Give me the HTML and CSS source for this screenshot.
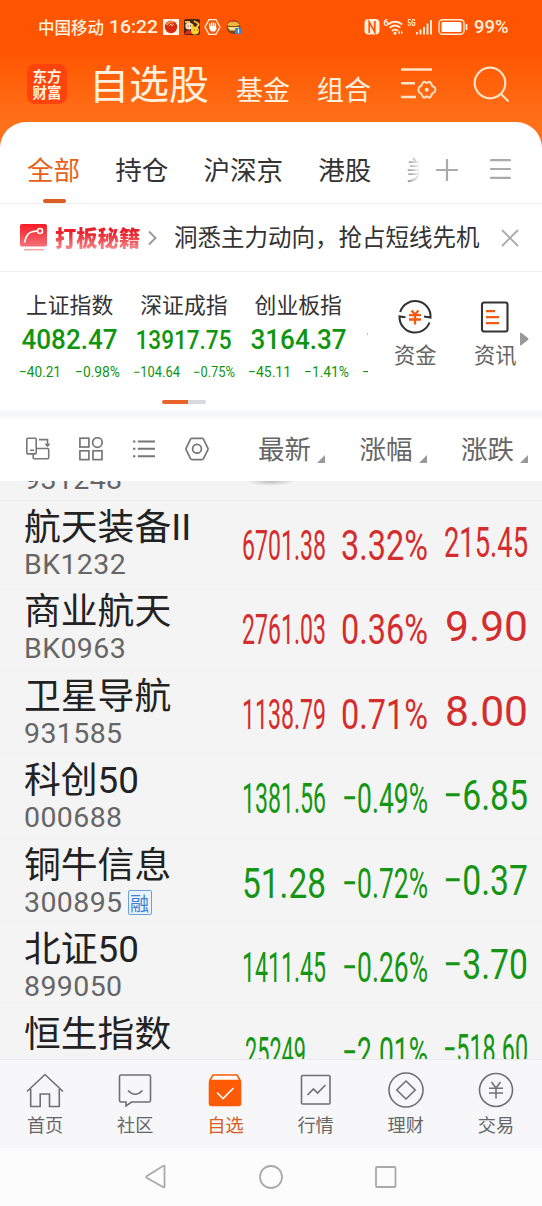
FILE: index.html
```html
<!DOCTYPE html>
<html lang="zh-CN">
<head>
  <meta charset="utf-8" />
  <meta name="viewport" content="width=device-width, initial-scale=1" />
  <title>自选股</title>
  <link rel="stylesheet" href="styles.css">
</head>
<body>
  <div class="app">
    <header class="header">
      <div class="status">
        <span class="carrier">中国移动</span>
        <svg class="clock" width="50" height="20"><text x="0" y="16" textLength="49" lengthAdjust="spacingAndGlyphs">16:22</text></svg>
        <svg class="notices" width="80" height="18" viewBox="0 0 80 18">
          <rect x="0" y="1" width="16" height="16" fill="#fff3e4"/>
          <circle cx="8" cy="9" r="6.2" fill="#d92b12"/>
          <path d="M3.5 7q3-4 7-2.500" stroke="#f58a3c" stroke-width="2" fill="none"/>
          <path d="M6 8l2-2 1 2 2-2" stroke="#ffd27a" fill="none"/>
          <rect x="21" y="1" width="16" height="16" rx="2" fill="#4b2515"/>
          <path d="M22 4h5M31 3l5 3" stroke="#efb52c" stroke-width="2"/>
          <circle cx="26" cy="8" r="3.600" fill="#ffe1bd"/>
          <path d="M24.500 8h1M27 8h1" stroke="#24120b"/>
          <path d="M22 15q3-5 7-1l1 2h-8z" fill="#e52c21"/>
          <circle cx="32" cy="12.500" r="4" fill="#ffd52b"/>
          <path d="M30 9l-1-3M34 9l2-3" stroke="#ffd52b" stroke-width="2"/>
          <path d="M31 12h.8M34 12h.8" stroke="#333"/>
          <path d="M46 1.700h7l4 7.300-4 7.300h-7L42 9z" fill="none" stroke="#fff0df" stroke-width="1.300"/>
          <path d="M46.800 9V6M48.700 8V4.800M50.600 8V4.800M52.400 9V6" stroke="#fff" stroke-width="1.300" stroke-linecap="round"/>
          <path d="M46.200 8h6.900v2.500l1.300-1-2.400 4h-3.800q-2-2-2-5z" fill="#fff"/>
          <circle cx="70.500" cy="9" r="7" fill="#7a4a25"/>
          <path d="M64 7q6-8 13 0l-3 1H66z" fill="#f2b63e"/>
          <path d="M64.500 9h12l-2 3.500H67z" fill="#ffe07f"/>
          <path d="M68 4l2-3 3 3" fill="#e33a1a"/>
          <rect x="72" y="10" width="7" height="6" rx="1" fill="#3987d3"/>
          <path d="M75.500 11v4" stroke="#fff"/>
        </svg>
        <svg class="signals" width="106" height="18" viewBox="0 0 106 18">
          <rect x=".5" y="1" width="15" height="15.500" rx="4" fill="#fff0df"/>
          <path d="M5.200 15V4l5.600 10V3" stroke="#ff5500" stroke-width="1.700" fill="none"/>
          <g fill="none" stroke="#fff0df" stroke-width="1.900" stroke-linecap="round">
            <path d="M24.500 6q6.500-4.500 13 0M26.300 9.300q4.700-3.800 9.400 0M28.500 12.500q2.500-1.800 5 0"/>
          </g>
          <circle cx="31" cy="15.300" r="1.500" fill="#fff0df"/>
          <path d="M34 14.500l2-2v4zM39 14.500l-2-2v4z" fill="#fff0df"/>
          <text x="19.500" y="8" class="tiny">6</text>
          <text x="43.500" y="8" class="tiny" textLength="8" lengthAdjust="spacingAndGlyphs">5G</text>
          <path d="M53 16.500v-2.500M56.500 16.500v-5M60 16.500V9M63.500 16.500V5.500M67 16.500V2" stroke="#fff0df" stroke-width="1.900"/>
          <rect x="75" y="1.700" width="25" height="14.600" rx="3.500" fill="none" stroke="#fff0df" stroke-width="1.400"/>
          <rect x="77.500" y="4" width="20" height="10" rx="1.500" fill="#fff"/>
          <path d="M102.500 6v6" stroke="#fff0df" stroke-width="1.700"/>
        </svg>
        <svg class="clock" width="35" height="20"><text x="0" y="16" textLength="34.500" lengthAdjust="spacingAndGlyphs">99%</text></svg>
      </div>
      <div class="titlebar">
        <div class="logo"><span>东方</span><span>财富</span></div>
        <h1>自选股</h1>
        <span class="head-link">基金</span>
        <span class="head-link">组合</span>
        <svg class="manage" width="37" height="36" viewBox="0 0 37 36" fill="none" stroke="#ffe3c8" stroke-width="2.400">
          <path d="M0 3.500h31M0 17.300h14M0 31h15"/>
          <path d="M22.200 16.200q1.200-.9 2.300.2 1.200 1 2.400 0 1.100-1.100 2.300-.2l1.500 2.500q.2 1.700 2 2 1.700.8 1.700 3t-1.700 3q-1.800.3-2 2l-1.500 2.500q-1.200.9-2.300-.2-1.200-1-2.400 0-1.100 1.100-2.300.2l-1.500-2.500q-.2-1.700-2-2-1.300-.8-1.300-3t1.300-3q1.800-.3 2-2z" stroke-width="2"/>
          <circle cx="25.700" cy="23.700" r="2" fill="#ffe3c8" stroke="none"/>
        </svg>
        <svg class="search" width="38" height="38" viewBox="0 0 38 38" fill="none" stroke="#ffe3c8" stroke-width="2.200">
          <circle cx="17" cy="17" r="15.300"/><path d="M27.500 27.500l8 8"/>
        </svg>
      </div>
    </header>

    <main class="panel">
      <nav class="groups">
        <a class="group active">全部</a>
        <a class="group">持仓</a>
        <a class="group">沪深京</a>
        <a class="group">港股</a>
        <a class="group more">美</a>
        <svg class="add" width="22" height="22" viewBox="0 0 22 22" stroke="#aaa" stroke-width="2.200" stroke-linecap="round"><path d="M1 11h20M11 1v20"/></svg>
        <svg class="menu" width="21" height="20" viewBox="0 0 21 20" stroke="#aaa" stroke-width="2.200" stroke-linecap="round"><path d="M1 1.200h19M1 10h19M1 18.800h19"/></svg>
      </nav>

      <div class="notice">
        <svg width="28" height="28" viewBox="0 0 28 28">
          <defs><linearGradient id="red" x2="0" y2="1"><stop stop-color="#f81b24"/><stop offset="1" stop-color="#f37278"/></linearGradient></defs>
          <rect x="0" y="0" width="27" height="22.500" rx="2" fill="url(#red)"/>
          <path d="M4.500 18.500q2-9 7-10.500 3-1 6-.8" fill="none" stroke="#fff" stroke-width="1.800"/>
          <circle cx="20" cy="7" r="2.500" fill="none" stroke="#fff" stroke-width="1.500"/>
          <path d="M4 25.700h20" stroke="#f7a5a5" stroke-width="1.500"/>
        </svg>
        <strong>打板秘籍</strong>
        <svg class="chevron" width="9" height="16" viewBox="0 0 9 16" fill="none" stroke="#999" stroke-width="1.900"><path d="M1 1.500l6.500 6.500L1 14.500"/></svg>
        <span class="notice-text">洞悉主力动向，抢占短线先机</span>
        <svg class="close" width="18" height="18" viewBox="0 0 18 18" stroke="#aaa" stroke-width="1.800"><path d="M1 1l16 16M17 1L1 17"/></svg>
      </div>

      <section class="market">
        <div class="indices">
          <div class="index">
            <span>上证指数</span>
            <svg width="114" height="80">
              <text class="price" x="6.500" y="29.500" font-size="28" textLength="96" lengthAdjust="spacingAndGlyphs">4082.47</text>
              <text class="delta" x="4" y="58" textLength="42" lengthAdjust="spacingAndGlyphs">−40.21</text>
              <text class="delta" x="60" y="58" textLength="45" lengthAdjust="spacingAndGlyphs">−0.98%</text>
            </svg>
          </div>
          <div class="index">
            <span>深证成指</span>
            <svg width="114" height="80">
              <text class="price" x="6.500" y="29.500" font-size="25" textLength="96" lengthAdjust="spacingAndGlyphs">13917.75</text>
              <text class="delta small" x="4" y="58" textLength="47" lengthAdjust="spacingAndGlyphs">−104.64</text>
              <text class="delta small" x="64" y="58" textLength="42" lengthAdjust="spacingAndGlyphs">−0.75%</text>
            </svg>
          </div>
          <div class="index">
            <span>创业板指</span>
            <svg width="114" height="80">
              <text class="price" x="6.500" y="29.500" font-size="28" textLength="96" lengthAdjust="spacingAndGlyphs">3164.37</text>
              <text class="delta" x="4" y="58" textLength="43" lengthAdjust="spacingAndGlyphs">−45.11</text>
              <text class="delta" x="60" y="58" textLength="45" lengthAdjust="spacingAndGlyphs">−1.41%</text>
            </svg>
          </div>
          <div class="index">
            <span></span>
            <svg width="20" height="80">
              <text class="price" x="7.500" y="29.500" font-size="25">1</text>
              <text class="delta" x="4" y="58">−</text>
            </svg>
          </div>
        </div>
        <div class="shortcut">
          <svg width="36" height="36" viewBox="0 0 36 36" fill="none" stroke="#333" stroke-width="2.100">
            <path d="M3.200 13A15.500 15.500 0 0 1 33.500 18.500l-6.500-1"/>
            <path d="M32.500 23.500A15.500 15.500 0 0 1 2.500 17.500l6 .8"/>
            <path d="M14.500 11.500l3.500 4 3.500-4M12 16.200h12M12 20.500h12M18 15.500v10" stroke="#f45b12" stroke-width="2.300"/>
          </svg>
          <span>资金</span>
        </div>
        <div class="shortcut">
          <svg width="36" height="36" viewBox="0 0 36 36" fill="none" stroke="#333" stroke-width="2.100">
            <rect x="5" y="3.500" width="25.500" height="29" rx="2"/>
            <path d="M9 12.200h9M9 18.200h13M9 24.200h13" stroke="#f45b12" stroke-width="2.300"/>
          </svg>
          <span>资讯</span>
        </div>
        <svg class="next" width="9" height="14" viewBox="0 0 9 14"><path d="M0 1.500Q0 0 1.300.7L8 6q1 1 0 2L1.300 13.300Q0 14 0 12.500z" fill="#999"/></svg>
        <div class="pager"></div>
      </section>

      <section class="columns">
        <svg width="24" height="24" viewBox="0 0 24 24" fill="none" stroke="#777" stroke-width="1.600">
          <path d="M10.200 8V2.200q0-.9-.9-.9H1.700q-.9 0-.9.900V16q0 .9.900.9h7.600q.9 0 .9-.9V8M4 13.300h4M13 2.600h8.500V9M19.300 6.800l2.200 2.200 2-2.200M10.200 11.500h11.500q1 0 1 1v8.200q0 1-1 1H8.200q-1 0-1-1V17"/>
        </svg>
        <svg width="24" height="24" viewBox="0 0 24 24" fill="none" stroke="#777" stroke-width="1.700">
          <rect x=".9" y="1.200" width="9" height="8.800"/><circle cx="18.400" cy="5.500" r="4.800"/><rect x=".9" y="13.800" width="9" height="8.800"/><rect x="14" y="13.800" width="9" height="8.800"/>
        </svg>
        <svg width="24" height="24" viewBox="0 0 24 24" fill="none" stroke="#777" stroke-width="1.900">
          <path d="M1 4.500h2.400M5.800 4.500H23M1 11.800h2.400M5.800 11.800H23M1 19.200h2.400M5.800 19.200H23"/>
        </svg>
        <svg width="24" height="24" viewBox="0 0 24 24" fill="none" stroke="#777" stroke-width="1.700">
          <path d="M7 1.300h10q1 0 1.500.8l4.300 9q.4.900 0 1.700l-4.300 8.900q-.5.900-1.500.9H7q-1 0-1.500-.9l-4.300-8.900q-.4-.8 0-1.700l4.300-9q.5-.8 1.500-.8z"/><circle cx="12" cy="11.700" r="4.400"/>
        </svg>
        <span class="sort">最新</span>
        <span class="sort">涨幅</span>
        <span class="sort">涨跌</span>
      </section>
    </main>

    <section class="list">
      <div class="row">
        <div class="stock"><span class="name"></span><span class="code">931248</span></div>
      </div>
      <div class="row up">
        <div class="stock"><span class="name">航天装备II</span><span class="code">BK1232</span></div>
        <svg class="nums" width="300" height="84"><text x="12" y="58.500" textLength="84" lengthAdjust="spacingAndGlyphs">6701.38</text><text x="111" y="58.500" textLength="87" lengthAdjust="spacingAndGlyphs">3.32%</text><text x="214" y="56" textLength="84" lengthAdjust="spacingAndGlyphs">215.45</text></svg>
      </div>
      <div class="row up">
        <div class="stock"><span class="name">商业航天</span><span class="code">BK0963</span></div>
        <svg class="nums" width="300" height="84"><text x="12" y="58.500" textLength="84" lengthAdjust="spacingAndGlyphs">2761.03</text><text x="111" y="58.500" textLength="87" lengthAdjust="spacingAndGlyphs">0.36%</text><text x="215" y="56" textLength="83" lengthAdjust="spacingAndGlyphs">9.90</text></svg>
      </div>
      <div class="row up">
        <div class="stock"><span class="name">卫星导航</span><span class="code">931585</span></div>
        <svg class="nums" width="300" height="84"><text x="12" y="58.500" textLength="84" lengthAdjust="spacingAndGlyphs">1138.79</text><text x="111" y="58.500" textLength="87" lengthAdjust="spacingAndGlyphs">0.71%</text><text x="215" y="56" textLength="83" lengthAdjust="spacingAndGlyphs">8.00</text></svg>
      </div>
      <div class="row">
        <div class="stock"><span class="name">科创50</span><span class="code">000688</span></div>
        <svg class="nums" width="300" height="84"><text x="12" y="58.500" textLength="84" lengthAdjust="spacingAndGlyphs">1381.56</text><text x="112" y="58.500" textLength="86" lengthAdjust="spacingAndGlyphs">−0.49%</text><text x="213" y="56" textLength="85" lengthAdjust="spacingAndGlyphs">−6.85</text></svg>
      </div>
      <div class="row">
        <div class="stock"><span class="name">铜牛信息</span><span class="code">300895<i class="tag">融</i></span></div>
        <svg class="nums" width="300" height="84"><text x="12" y="58.500" textLength="84" lengthAdjust="spacingAndGlyphs">51.28</text><text x="112" y="58.500" textLength="86" lengthAdjust="spacingAndGlyphs">−0.72%</text><text x="213" y="56" textLength="85" lengthAdjust="spacingAndGlyphs">−0.37</text></svg>
      </div>
      <div class="row">
        <div class="stock"><span class="name">北证50</span><span class="code">899050</span></div>
        <svg class="nums" width="300" height="84"><text x="12" y="58.500" textLength="84" lengthAdjust="spacingAndGlyphs">1411.45</text><text x="112" y="58.500" textLength="86" lengthAdjust="spacingAndGlyphs">−0.26%</text><text x="213" y="56" textLength="85" lengthAdjust="spacingAndGlyphs">−3.70</text></svg>
      </div>
      <div class="row">
        <div class="stock"><span class="name">恒生指数</span></div>
        <svg class="nums" width="300" height="84"><text x="15" y="58.500" textLength="61" lengthAdjust="spacingAndGlyphs">25249</text><text x="112" y="58.500" textLength="86" lengthAdjust="spacingAndGlyphs">−2.01%</text><text x="213" y="56" textLength="85" lengthAdjust="spacingAndGlyphs">−518.60</text></svg>
      </div>
    </section>

    <nav class="tabbar">
      <a class="tab">
        <svg width="38" height="38" viewBox="0 0 38 38"><path d="M1 19.500L19 2.500l18 17M4.700 17v17.500h9.500V22h9.300v12.500h9.800V17"/></svg>
        <span>首页</span>
      </a>
      <a class="tab">
        <svg width="38" height="38" viewBox="0 0 38 38"><path d="M5 3h28q1.500 0 1.500 1.500v24q0 1.500-1.500 1.500H15.500L10 34v-4H5q-1.500 0-1.500-1.500v-24Q3.500 3 5 3zM12 18.500q7 7.500 14.500 0"/></svg>
        <span>社区</span>
      </a>
      <a class="tab active">
        <svg width="38" height="38" viewBox="0 0 38 38"><path d="M3.500 9L7 3h24l3.500 6" fill="#fff"/><rect x="3.500" y="8.500" width="31" height="25" rx="2" fill="#ff5a05"/><path d="M11 20.500l6 6L27.500 16" stroke="#fff"/></svg>
        <span>自选</span>
      </a>
      <a class="tab">
        <svg width="38" height="38" viewBox="0 0 38 38"><rect x="4.500" y="3.500" width="28.500" height="28.500" rx="1"/><path d="M10.500 23l6-6 4 4 8-8"/></svg>
        <span>行情</span>
      </a>
      <a class="tab">
        <svg width="38" height="38" viewBox="0 0 38 38"><circle cx="19" cy="18" r="17"/><path d="M19 9l9.200 9L19 27l-9.200-9z"/></svg>
        <span>理财</span>
      </a>
      <a class="tab">
        <svg width="38" height="38" viewBox="0 0 38 38"><circle cx="19" cy="18" r="16.500"/><path d="M14.500 10l4.500 6 4.500-6M12 16.300h14M12 21h14M19 16v10.500"/></svg>
        <span>交易</span>
      </a>
    </nav>

    <footer class="system">
      <svg width="252" height="26" viewBox="0 0 252 26" fill="none" stroke="#aaa" stroke-width="1.800">
        <path d="M2 12L18 2q1.500-1 1.500.5v20q0 1.500-1.500.5L2 14q-1.500-1 0-2z"/>
        <circle cx="126" cy="13" r="11"/>
        <rect x="231" y="3" width="19.500" height="20" rx="1"/>
      </svg>
    </footer>
  </div>
</body>
</html>
```
FILE: styles.css
```css
* { box-sizing: border-box; }
body { margin:0; background:#fff; font-family:"Noto Sans CJK SC", sans-serif; color:#333; }
svg { display:block; flex:none; }
.app { width:542px; height:1206px; overflow:hidden; display:flex; flex-direction:column; }

.header {
  height:148px; flex:none; color:#fff0df;
  background:linear-gradient(#ff5500 50px, #ff7119 122px);
}
.status { display:flex; align-items:center; height:54px; padding-left:38px; font-size:16.5px; }
.carrier { width:71px; line-height:20px; font-weight:500; }
.clock { font:500 18.5px Roboto, sans-serif; fill:#fff0df; }
.notices { margin-left:4px; }
.signals { margin-left:121px; margin-right:4px; }
.tiny { font:bold 9px Roboto, sans-serif; fill:#fff0df; }
.titlebar { display:flex; height:68px; padding-left:27px; }
.logo {
  width:40px; height:40px; margin-top:10px; padding-top:4px; border-radius:8px;
  background:#ff430d; font-size:14.5px; font-weight:700; line-height:16px; text-align:center;
}
.logo span { display:block; }
h1 { margin:8px 0 0 22px; width:147px; font-size:40px; line-height:40px; font-weight:400; }
.head-link { width:81px; margin-top:20px; font-size:27px; line-height:30px; }
.head-link + .head-link { width:82px; }
.manage { margin:12px 35px 0 2px; }
.search { margin-top:12px; }

.panel { flex:none; margin-top:-26px; height:359px; background:#fff; border-radius:26px 26px 0 0; }
.groups { display:flex; gap:35px; height:82px; padding:28px 0 0 27px; border-bottom:1px solid #ececec; }
.group { flex:none; position:relative; font-size:26.6px; line-height:38px; }
.group.active { color:#e8611a; }
.group.active::after {
  content:""; position:absolute; left:16px; bottom:0; width:23px; height:4px;
  border-radius:2px; background:#dd5c22;
}
.group.more {
  width:13px; overflow:hidden; white-space:nowrap; color:transparent;
  background:linear-gradient(90deg, #888, #f2f2f2); -webkit-background-clip:text; background-clip:text;
}
.add { margin:9px 0 0 -18px; }
.menu { margin:9px 0 0 -3px; }

.notice { display:flex; align-items:center; height:68px; padding:0 0 0 20px; border-bottom:1px solid #f0f0f0; }
.notice strong {
  margin-left:7px; width:93px; margin-top:-2px; font-size:21.3px; line-height:30px; font-weight:900; color:transparent;
  background:linear-gradient(#e9202b 35%, #f47e80 85%); -webkit-background-clip:text; background-clip:text;
}
.notice-text { margin:-3px 0 0 17px; width:327px; font-size:23.5px; line-height:32px; white-space:nowrap; }

.market { position:relative; display:flex; height:138px; padding-left:15px; }
.indices { display:flex; width:353px; overflow:hidden; }
.index { flex:none; width:114.3px; }
.index span { display:block; height:30px; margin-top:17px; padding-left:11px; font-size:21.8px; line-height:30px; }
.price { font-family:Roboto, sans-serif; font-weight:500; fill:#109510; }
.delta { font:15px Roboto, sans-serif; fill:#109510; }
.delta.small { font-size:14px; }
.shortcut { width:80px; padding:27px 0 0 26px; color:#666; }
.shortcut svg { margin-left:3px; }
.shortcut span { display:block; font-size:21.3px; line-height:38px; }
.shortcut + .shortcut { width:70px; }
.next { position:absolute; left:520px; top:60px; }
.pager {
  position:absolute; left:162px; top:128px; width:44px; height:4px; border-radius:2px;
  background:linear-gradient(90deg, #e8642a 26px, #d6d9de 26px);
}

.columns {
  display:flex; align-items:center; height:71px; padding:0 0 1px 26px; gap:29px;
  border-top:8px solid #f5f7f9; color:#666;
}
.sort { position:relative; flex:none; width:72.5px; height:36px; font-size:26.5px; line-height:33px; }
.sort:first-of-type { margin-left:20px; }
.sort::after {
  content:""; position:absolute; left:59px; top:24px;
  border-left:8px solid transparent; border-bottom:8px solid #999;
}

.list {
  position:relative; height:578px; flex:none; overflow:hidden; background:#f4f4f4;
}
/* shade of the floating handle above the list */
.list::before {
  content:""; position:absolute; left:246px; top:-5px; width:50px; height:10px;
  background:radial-gradient(closest-side, #bbb, #f4f4f4);
}
.row { display:flex; height:84.5px; border-bottom:1px solid #f0f0f0; }
.row:first-child { margin-top:-65px; }
.stock { width:230px; padding-left:24px; font-family:Roboto, "Noto Sans CJK SC", sans-serif; }
.name { display:block; height:47px; padding-top:6px; font-size:36.8px; line-height:42px; color:#222; white-space:nowrap; }
.code { display:flex; align-items:center; height:34px; font-size:28.5px; line-height:34px; letter-spacing:.4px; color:#666; }
.tag {
  width:24px; height:25px; margin-left:5px; border:1px solid #6ba0dc; border-radius:2px; background:#eaf3fc;
  color:#3b82ce; font:normal 19px/23px "Noto Sans CJK SC", sans-serif; letter-spacing:0; text-align:center;
}
.nums { font:42.5px Roboto, sans-serif; fill:#149614; }
.up .nums { fill:#d42d2d; }

.tabbar {
  display:grid; grid-template-columns:repeat(6, 1fr); height:89px; flex:none;
  padding-right:1px; border-top:1px solid #e8e8ea; background:#f7f7fa; color:#666;
}
.tab { display:flex; flex-direction:column; align-items:center; padding-top:12px; }
.tab svg { fill:none; stroke:#707070; stroke-width:1.6; }
.tab span { margin-top:-1px; font-size:18.2px; line-height:31px; }
.tab.active { color:#d95d1e; }
.tab.active svg { stroke:#ff5a05; }
.system { display:flex; justify-content:center; height:58px; padding-top:16px; background:#fcfcfc; }
```
